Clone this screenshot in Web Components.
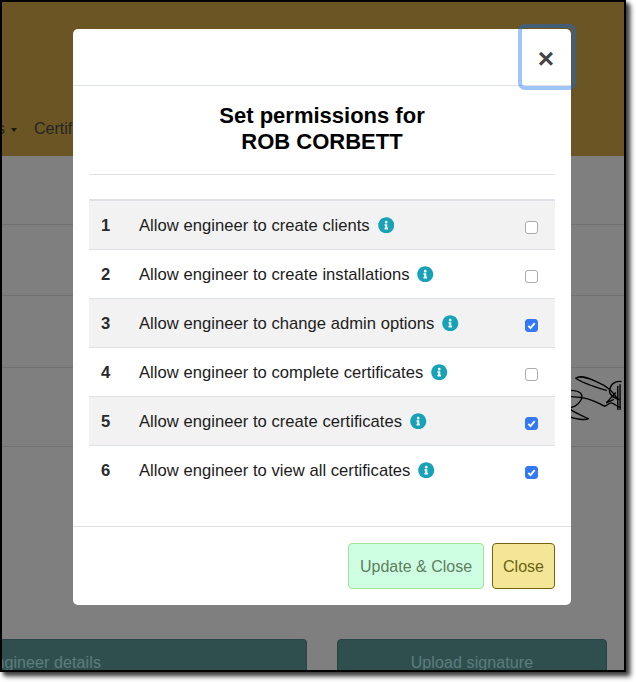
<!DOCTYPE html>
<html lang="en">
<head>
<meta charset="utf-8">
<title>Set permissions</title>
<style>
html,body{margin:0;padding:0;background:#fff;height:100%;overflow:hidden}
body{font:16px/24px "Liberation Sans",Arial,sans-serif;color:#212529}
</style>
</head>
<body>
<app-frame>
  <page-scene slot="scene"></page-scene>
  <perm-modal slot="overlay" heading="Set permissions for" person="ROB CORBETT">
    <perm-row n="1" label="Allow engineer to create clients"></perm-row>
    <perm-row n="2" label="Allow engineer to create installations"></perm-row>
    <perm-row n="3" label="Allow engineer to change admin options" checked></perm-row>
    <perm-row n="4" label="Allow engineer to complete certificates"></perm-row>
    <perm-row n="5" label="Allow engineer to create certificates" checked></perm-row>
    <perm-row n="6" label="Allow engineer to view all certificates" checked></perm-row>
  </perm-modal>
</app-frame>
<script>
function define(name, html, init){
  customElements.define(name, class extends HTMLElement{
    connectedCallback(){
      if(this.shadowRoot) return;
      const root=this.attachShadow({mode:'open'});
      root.innerHTML=html(this);
      if(init) init(this,root);
    }
  });
}
define('app-frame',()=>`<style>
:host{display:block;width:626px;height:672px;box-sizing:border-box;border:2px solid #000;position:relative;overflow:visible;box-shadow:3px 3px 4px #3a3a3a,5px 5px 5px #999}
.clip{position:absolute;inset:0;overflow:hidden;background:#fff}
.back{position:absolute;inset:0;background:rgba(0,0,0,.5);padding:27px 0 0 71px;box-sizing:border-box}
</style><div class="clip"><slot name="scene"></slot><div class="back"><slot name="overlay"></slot></div></div>`);

define('page-scene',()=>`<style>
:host{display:flex;flex-direction:column;height:100%;background:#fff}
nav{height:154px;background:#d6aa48;flex:none;display:flex;align-items:flex-end;padding-bottom:15px;box-sizing:border-box;color:#4a4a44;white-space:nowrap}
nav .m{margin-left:-5px;display:flex;align-items:center;gap:6px}
nav .m i{display:block;border-top:4.5px solid #33332e;border-left:3.5px solid transparent;border-right:3.5px solid transparent;margin-top:1px}
nav .c{margin-left:17px}
.row{flex:none;box-sizing:border-box;border-bottom:1px solid #dee2e6;position:relative}
.sig{position:absolute;left:0;top:0;width:100%;height:100%}
.btns{margin-top:192px;display:flex;gap:30px;flex:none}
.btn{height:46px;box-sizing:border-box;border:1px solid #4f8a8a;border-radius:4px;background:#5e9e9e;color:#b8f6f6;display:flex;align-items:center;justify-content:center;white-space:nowrap;letter-spacing:.1px;padding-top:2px}
.a{width:305px;justify-content:flex-end;padding-right:205px;border-left:none;border-top-left-radius:0;border-bottom-left-radius:0}
.b{width:270px}
</style>
<nav><span class="m">s<i></i></span><span class="c">Certif</span></nav>
<div class="row" style="height:69px"></div>
<div class="row" style="height:71px"></div>
<div class="row" style="height:72px"></div>
<div class="row" style="height:79px">
<svg class="sig" viewBox="0 0 622 79" fill="none" stroke="#000" stroke-width="1.4" stroke-linecap="round" aria-hidden="true">
<g transform="translate(-2,-368)">
<path d="M579.3 378.3C582 376 590 377 600 381.7 608 385 617 391 621.7 400"/>
<path d="M579.3 378.3C584 382 598 387 610 390.7"/>
<path d="M625 381.7C619 381 614 384 613.3 391.7 613.5 395 617 398 623.3 400"/>
<path d="M619.3 393.3L610 403.3 617.3 400"/>
<path d="M571.7 396.7C578 397 587 398 592 399.5 600 401.7 604 405 608.3 406.7 611 406.5 613 403 615 403.3 618 404 621 407 624 408"/>
<path d="M571.7 390.7C577 390.5 582 391 584.5 394 587 398 584 403 578.3 406.7 576 408 574 408.3 571.7 408.3"/>
<path d="M571.7 408.3C575 412 585 416 591.7 419.3 590 421 578 420 571.7 416.7"/>
<path d="M621.7 386.7V410M624 385V410"/>
</g></svg>
</div>
<div class="btns"><div class="btn a">ngineer details</div><div class="btn b">Upload signature</div></div>`);

define('perm-modal',h=>`<style>
:host{display:block;width:498px;height:576px;box-sizing:border-box;background:#fff;border-radius:5px;display:flex;flex-direction:column;position:relative;color:#212529}
header{height:57px;flex:none;box-sizing:border-box;border-bottom:1px solid #dee2e6;display:flex;justify-content:flex-end}
.x{appearance:none;width:50px;height:58px;margin:-1px -1px 0 0;padding:3px 2px 0 0;background:transparent;border:0;border-radius:3px;box-shadow:0 0 0 4px rgba(10,110,240,.4);font:700 28px/1 "Liberation Sans",Arial,sans-serif;color:#444;display:flex;align-items:center;justify-content:center;position:relative;z-index:1}
main{flex:1;padding:16px 16px 0;display:flex;flex-direction:column}
h1{margin:0;padding:1px 0 19px;border-bottom:1px solid #dee2e6;font:700 22px/26px "Liberation Sans",Arial,sans-serif;color:#000;text-align:center}
.t{margin-top:24px;border-top:2px solid #dee2e6}
footer{height:79px;flex:none;box-sizing:border-box;border-top:1px solid #dee2e6;display:flex;justify-content:flex-end;align-items:flex-start;gap:8px;padding:16px 16px 0}
.b{height:46px;box-sizing:border-box;border-radius:4px;font:16px/24px "Liberation Sans",Arial,sans-serif;padding:1px 0 0;display:block}
.u{width:136px;background:#ceffe3;border:1px solid #a3e598;color:#5f7d5f}
.c{width:63px;background:#f3e797;border:1px solid #75640f;color:#6b6214}
</style>
<header><button class="x" aria-label="Close">×</button></header>
<main><h1>${h.getAttribute('heading')}<br>${h.getAttribute('person')}</h1>
<div class="t"><slot></slot></div></main>
<footer><button class="b u">Update &amp; Close</button><button class="b c">Close</button></footer>`);

define('perm-row',h=>`<style>
:host{display:grid;grid-template-columns:50px 1fr 30px;height:49px;box-sizing:border-box;border-bottom:1px solid #dee2e6;align-items:center;color:#1c1c1c;font-size:16.6px}
:host(:nth-child(odd)){background:#f2f2f2}
:host(:last-child){border-bottom-color:transparent}
.n{font-weight:700;padding-left:12px;margin-top:2px;color:#2a2a2a}
.l{display:flex;align-items:center;gap:8px;white-space:nowrap;margin-top:2px;letter-spacing:.03px}
svg.i{width:16.5px;height:16.5px;fill:#17a2b8;margin-top:-2px;flex:none}
.c{display:grid;width:13px;height:13px;margin:4px 0 0 0}
.c>*{grid-area:1/1}
input{appearance:none;margin:0;width:13px;height:13px;box-sizing:border-box;border:1px solid #ababab;border-radius:3px;background:#fff}
input:checked{background:#3478f6;border-color:#3478f6}
.c svg{width:13px;height:13px;fill:none;stroke:#fff;stroke-width:1.8;display:block}
</style>
<div class="n">${h.getAttribute('n')}</div>
<div class="l"><span>${h.getAttribute('label')}</span>
<svg class="i" viewBox="0 0 512 512" aria-hidden="true"><path d="M256 8C119.043 8 8 119.083 8 256c0 136.997 111.043 248 248 248s248-111.003 248-248C504 119.083 392.957 8 256 8zm0 110c23.196 0 42 18.804 42 42s-18.804 42-42 42-42-18.804-42-42 18.804-42 42-42zm56 254c0 6.627-5.373 12-12 12h-88c-6.627 0-12-5.373-12-12v-24c0-6.627 5.373-12 12-12h12v-64h-12c-6.627 0-12-5.373-12-12v-24c0-6.627 5.373-12 12-12h64c6.627 0 12 5.373 12 12v100h12c6.627 0 12 5.373 12 12v24z"/></svg></div>
<div class="c"><input type="checkbox" ${h.hasAttribute('checked')?'checked':''}>${h.hasAttribute('checked')?'<svg viewBox="0 0 13 13" aria-hidden="true"><path d="M3.3 6.8l2.2 2.3 4.2-5"/></svg>':''}</div>`);
</script>
</body>
</html>
